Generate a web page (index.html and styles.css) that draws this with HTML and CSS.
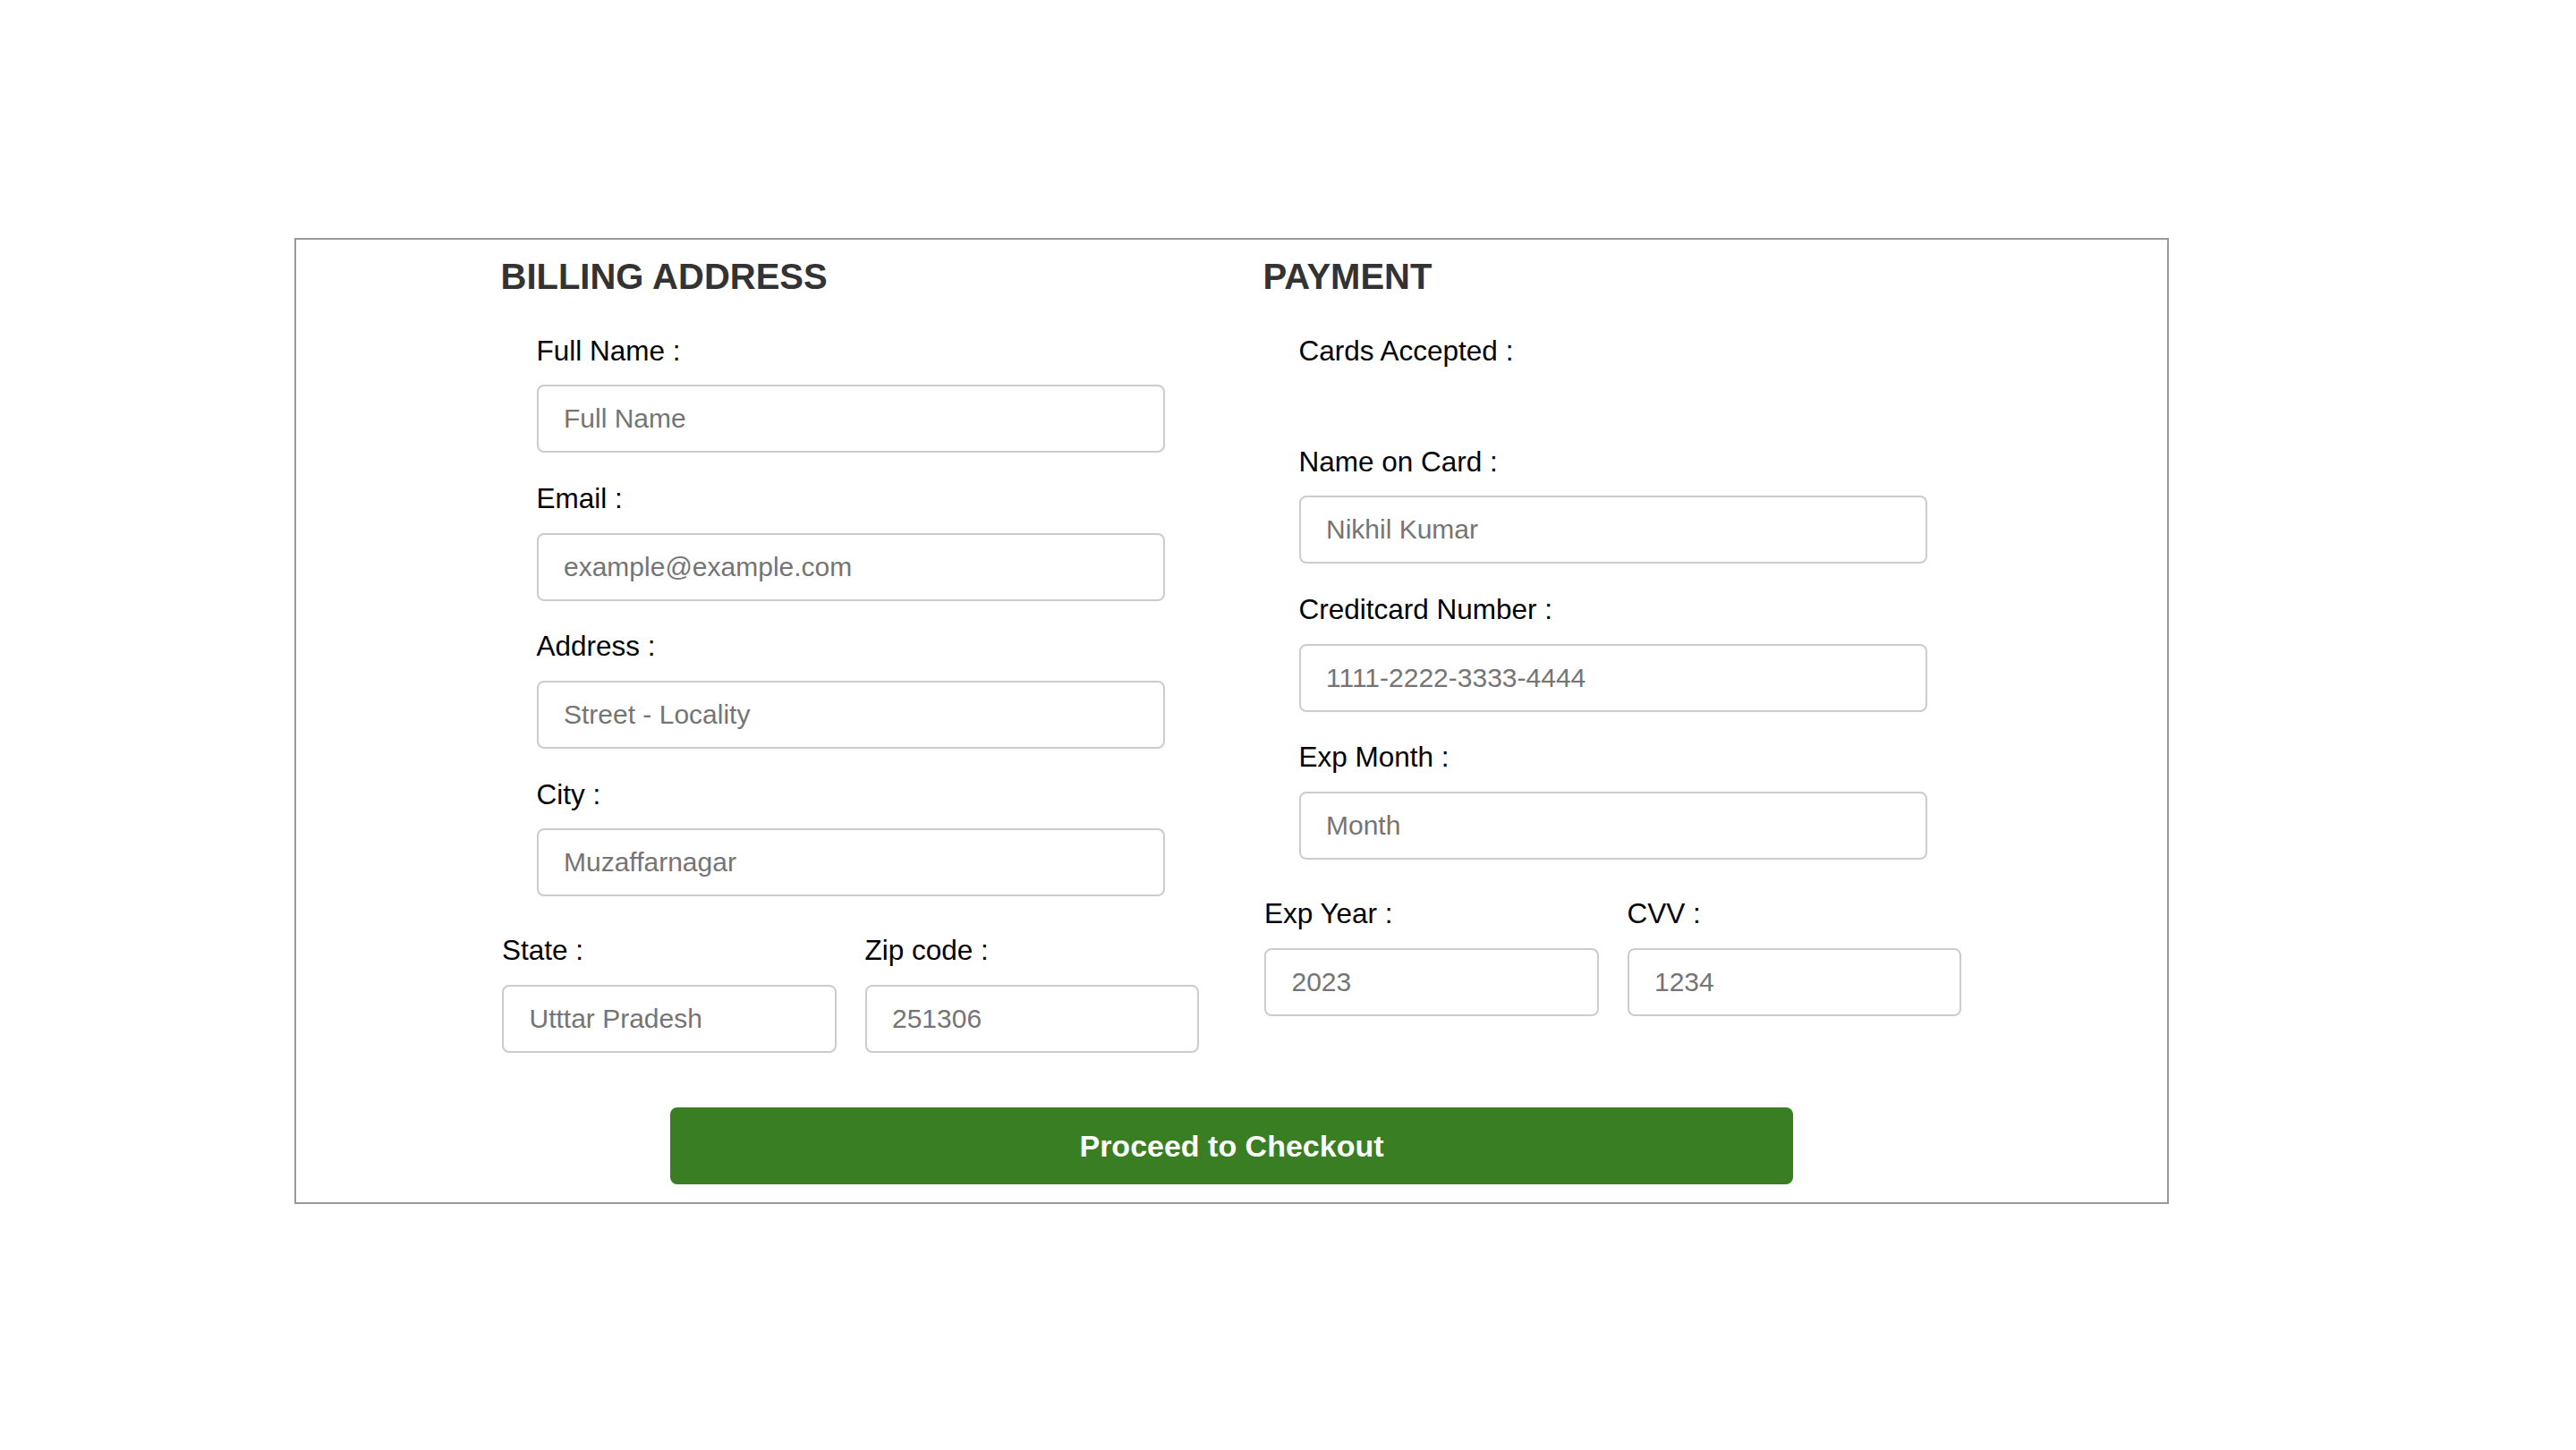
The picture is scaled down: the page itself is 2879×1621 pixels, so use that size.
FILE: index.html
```html
<!DOCTYPE html>
<html lang="en">
<head>
<meta charset="utf-8">
<title>Checkout</title>
<link rel="stylesheet" href="styles.css">
</head>
<body>
<div class="page">
  <form class="container">
    <div class="row">
      <div class="col">
        <h3 class="title">BILLING ADDRESS</h3>
        <div class="field">
          <div class="label">Full Name :</div>
          <input class="box" type="text" placeholder="Full Name">
        </div>
        <div class="field">
          <div class="label">Email :</div>
          <input class="box" type="text" placeholder="example@example.com">
        </div>
        <div class="field">
          <div class="label">Address :</div>
          <input class="box" type="text" placeholder="Street - Locality">
        </div>
        <div class="field">
          <div class="label">City :</div>
          <input class="box" type="text" placeholder="Muzaffarnagar">
        </div>
        <div class="pair">
          <div class="half">
            <div class="label">State :</div>
            <input class="box" type="text" placeholder="Utttar Pradesh">
          </div>
          <div class="half">
            <div class="label">Zip code :</div>
            <input class="box" type="text" placeholder="251306">
          </div>
        </div>
      </div>
      <div class="col">
        <h3 class="title">PAYMENT</h3>
        <div class="field cards">
          <div class="label">Cards Accepted :</div>
          <div class="card-icons"></div>
        </div>
        <div class="field">
          <div class="label">Name on Card :</div>
          <input class="box" type="text" placeholder="Nikhil Kumar">
        </div>
        <div class="field">
          <div class="label">Creditcard Number :</div>
          <input class="box" type="text" placeholder="1111-2222-3333-4444">
        </div>
        <div class="field">
          <div class="label">Exp Month :</div>
          <input class="box" type="text" placeholder="Month">
        </div>
        <div class="pair">
          <div class="half">
            <div class="label">Exp Year :</div>
            <input class="box" type="text" placeholder="2023">
          </div>
          <div class="half">
            <div class="label">CVV :</div>
            <input class="box" type="text" placeholder="1234">
          </div>
        </div>
      </div>
    </div>
    <div class="actions">
      <button class="submit" type="button">Proceed to Checkout</button>
    </div>
  </form>
</div>
</body>
</html>
```

FILE: styles.css
```css
html, body {
  margin: 0;
  padding: 0;
  background: #ffffff;
}

body {
  font-family: "Liberation Sans", Arial, sans-serif;
  color: #000000;
}

.page {
  padding: 266px 0 0 329px;
}

.container {
  box-sizing: border-box;
  width: 2095px;
  margin: 0;
  border: 2px solid #9a9a9a;
  padding: 18.4px 230px 20px 230px;
}

.row {
  display: flex;
  gap: 73px;
}

.col {
  flex: 1 1 0;
  min-width: 0;
}

.title {
  margin: 0 0 41.4px -1.5px;
  font-size: 40px;
  line-height: 46px;
  font-weight: bold;
  color: #333333;
}

.field {
  padding: 0 38.5px;
  margin-bottom: 32.7px;
}

.label {
  font-size: 31.5px;
  line-height: 36px;
  margin-bottom: 20.6px;
  color: #000000;
}

.box {
  display: block;
  box-sizing: border-box;
  width: 100%;
  height: 76px;
  margin: 0;
  border: 2px solid #cccccc;
  border-radius: 8px;
  padding: 0 20px 0 28.5px;
  font-family: "Liberation Sans", Arial, sans-serif;
  font-size: 30px;
  color: #333333;
  background: #ffffff;
  outline: none;
}

.box::placeholder {
  color: #757575;
  opacity: 1;
}

.cards {
  margin-bottom: 0;
}

.cards .label {
  margin-bottom: 0;
}

.card-icons {
  height: 88px;
}

.pair {
  display: flex;
  gap: 32px;
  margin-top: 42.2px;
}

.half {
  flex: 1 1 0;
  min-width: 0;
}

.actions {
  display: flex;
  justify-content: center;
  margin-top: 61.4px;
}

.submit {
  width: 1255px;
  height: 86px;
  border: none;
  border-radius: 8px;
  background: #397e22;
  color: #ffffff;
  font-family: "Liberation Sans", Arial, sans-serif;
  font-size: 34px;
  font-weight: bold;
  cursor: pointer;
}
```
